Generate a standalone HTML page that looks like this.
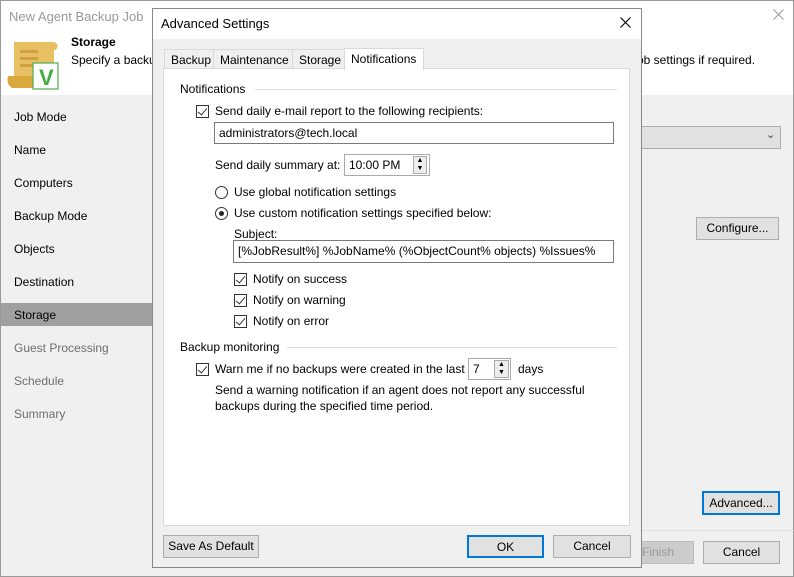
<!DOCTYPE html>
<html><head><style>
*{margin:0;padding:0;box-sizing:border-box}
body{width:794px;height:577px;position:relative;overflow:hidden;font-family:"Liberation Sans",sans-serif;font-size:12px;color:#000;background:#f0f0f0}
.a{position:absolute;white-space:nowrap}
.btn{position:absolute;background:#e1e1e1;border:1px solid #adadad;text-align:center;line-height:20px}
.cb{position:absolute;width:13px;height:13px;border:1px solid #333;background:#fff}
.cb:after{content:"";position:absolute;left:3px;top:0px;width:4px;height:8px;border:solid #333;border-width:0 1.5px 1.5px 0;transform:rotate(40deg)}
.rb{position:absolute;width:13px;height:13px;border:1px solid #333;border-radius:50%;background:#fff}
.in{position:absolute;background:#fff;border:1px solid #7a7a7a;padding-left:4px;line-height:20px}
</style></head><body>
<div class="a" style="left:0;top:0;width:794px;height:95px;background:#fff"></div>
<div class="a" style="left:0;top:0;width:794px;height:577px;border:1px solid #999"></div>
<div class="a" style="left:9px;top:9px;color:#999;font-size:13px">New Agent Backup Job</div>
<svg class="a" style="left:773px;top:9px" width="11" height="11"><path d="M0.5 0.5L10.5 10.5M10.5 0.5L0.5 10.5" stroke="#999" stroke-width="1"/></svg>
<svg class="a" style="left:6px;top:38px" width="54" height="54" viewBox="0 0 54 54">
<path d="M8 4 H48 Q54 6 50 12 L48 12 V44 H8 Z" fill="#e8c064"/>
<path d="M2 38 H30 V50 H6 Q0 46 2 38Z" fill="#d9a93e"/>
<rect x="14" y="12" width="18" height="3" fill="#d2a040"/><rect x="14" y="19" width="18" height="3" fill="#d2a040"/><rect x="14" y="26" width="18" height="3" fill="#d2a040"/>
<rect x="27" y="25" width="25" height="26" fill="#fff" stroke="#4cae4c" stroke-width="1.2"/>
<text x="33" y="47" font-family="Liberation Sans" font-weight="bold" font-size="22" fill="#3fae3f">V</text></svg>
<div class="a" style="left:71px;top:35px;font-weight:bold;font-size:12px">Storage</div>
<div class="a" style="left:71px;top:53px">Specify a backu</div>
<div class="a" style="left:637px;top:53px">ob settings if required.</div>
<div class="a" style="left:152px;top:95px;width:1px;height:435px;background:#888"></div>
<div class="a" style="left:1px;top:303px;width:151px;height:23px;background:#a0a0a0"></div>
<div class="a" style="left:14px;top:110px">Job Mode</div>
<div class="a" style="left:14px;top:143px">Name</div>
<div class="a" style="left:14px;top:176px">Computers</div>
<div class="a" style="left:14px;top:209px">Backup Mode</div>
<div class="a" style="left:14px;top:242px">Objects</div>
<div class="a" style="left:14px;top:275px">Destination</div>
<div class="a" style="left:14px;top:308px">Storage</div>
<div class="a" style="left:14px;top:341px;color:#6d6d6d">Guest Processing</div>
<div class="a" style="left:14px;top:374px;color:#6d6d6d">Schedule</div>
<div class="a" style="left:14px;top:407px;color:#6d6d6d">Summary</div>
<div class="a" style="left:630px;top:126px;width:151px;height:23px;background:#e1e1e1;border:1px solid #adadad"></div>
<div class="a" style="left:766px;top:128px;font-size:11px;color:#444">⌄</div>
<div class="btn" style="left:696px;top:217px;width:83px;height:23px">Configure...</div>
<div class="btn" style="left:702px;top:491px;width:78px;height:24px;border:2px solid #0078d7">Advanced...</div>
<div class="a" style="left:152px;top:530px;width:642px;height:1px;background:#ddd"></div>
<div class="btn" style="left:600px;top:541px;width:94px;height:23px;color:#999;background:#ccc;border-color:#bbb;text-align:left;padding-left:41px">Finish</div>
<div class="btn" style="left:703px;top:541px;width:77px;height:23px">Cancel</div>

<div class="a" style="left:152px;top:8px;width:490px;height:560px;background:#f0f0f0;border:1px solid #888"></div>
<div class="a" style="left:153px;top:9px;width:488px;height:30px;background:#fff"></div>
<div class="a" style="left:161px;top:16px;font-size:13px">Advanced Settings</div>
<svg class="a" style="left:620px;top:17px" width="11" height="11"><path d="M0.5 0.5L10.5 10.5M10.5 0.5L0.5 10.5" stroke="#000" stroke-width="1.1"/></svg>
<div class="a" style="left:163px;top:68px;width:467px;height:458px;background:#fff;border:1px solid #d9d9d9"></div>
<div class="a" style="left:164px;top:49px;width:50px;height:20px;background:#f0f0f0;border:1px solid #d9d9d9;padding:3px 0 0 6px">Backup</div>
<div class="a" style="left:213px;top:49px;width:80px;height:20px;background:#f0f0f0;border:1px solid #d9d9d9;padding:3px 0 0 6px">Maintenance</div>
<div class="a" style="left:292px;top:49px;width:53px;height:20px;background:#f0f0f0;border:1px solid #d9d9d9;padding:3px 0 0 6px">Storage</div>
<div class="a" style="left:344px;top:48px;width:80px;height:22px;background:#fff;border:1px solid #d9d9d9;border-bottom:none;padding:3px 0 0 6px">Notifications</div>
<div class="a" style="left:180px;top:82px">Notifications</div>
<div class="a" style="left:255px;top:89px;width:362px;height:1px;background:#ddd"></div>
<div class="cb" style="left:196px;top:105px"></div>
<div class="a" style="left:215px;top:104px">Send daily e-mail report to the following recipients:</div>
<div class="in" style="left:214px;top:122px;width:400px;height:22px">administrators@tech.local</div>
<div class="a" style="left:215px;top:158px">Send daily summary at:</div>
<div class="in" style="left:344px;top:154px;width:86px;height:22px;border-color:#aaa">10:00 PM</div>
<div class="a" style="left:413px;top:156px;width:14px;height:18px;border:1px solid #aaa;background:#eee;font-size:7px;line-height:8px;text-align:center">▲<br>▼</div>
<div class="rb" style="left:215px;top:186px"></div>
<div class="a" style="left:234px;top:185px">Use global notification settings</div>
<div class="rb" style="left:215px;top:207px"></div>
<div class="a" style="left:219px;top:211px;width:5px;height:5px;border-radius:50%;background:#222"></div>
<div class="a" style="left:234px;top:206px">Use custom notification settings specified below:</div>
<div class="a" style="left:234px;top:227px">Subject:</div>
<div class="in" style="left:233px;top:240px;width:381px;height:23px">[%JobResult%] %JobName% (%ObjectCount% objects) %Issues%</div>
<div class="cb" style="left:234px;top:273px"></div>
<div class="a" style="left:253px;top:272px">Notify on success</div>
<div class="cb" style="left:234px;top:294px"></div>
<div class="a" style="left:253px;top:293px">Notify on warning</div>
<div class="cb" style="left:234px;top:315px"></div>
<div class="a" style="left:253px;top:314px">Notify on error</div>
<div class="a" style="left:180px;top:340px">Backup monitoring</div>
<div class="a" style="left:287px;top:347px;width:330px;height:1px;background:#ddd"></div>
<div class="cb" style="left:196px;top:363px"></div>
<div class="a" style="left:215px;top:362px">Warn me if no backups were created in the last</div>
<div class="in" style="left:468px;top:358px;width:43px;height:22px;border-color:#aaa">7</div>
<div class="a" style="left:494px;top:360px;width:15px;height:18px;border:1px solid #aaa;background:#eee;font-size:7px;line-height:8px;text-align:center">▲<br>▼</div>
<div class="a" style="left:518px;top:362px">days</div>
<div class="a" style="left:215px;top:383px">Send a warning notification if an agent does not report any successful</div>
<div class="a" style="left:215px;top:399px">backups during the specified time period.</div>
<div class="btn" style="left:163px;top:535px;width:96px;height:23px">Save As Default</div>
<div class="btn" style="left:467px;top:535px;width:77px;height:23px;border:2px solid #0078d7">OK</div>
<div class="btn" style="left:553px;top:535px;width:78px;height:23px">Cancel</div>
</body></html>
